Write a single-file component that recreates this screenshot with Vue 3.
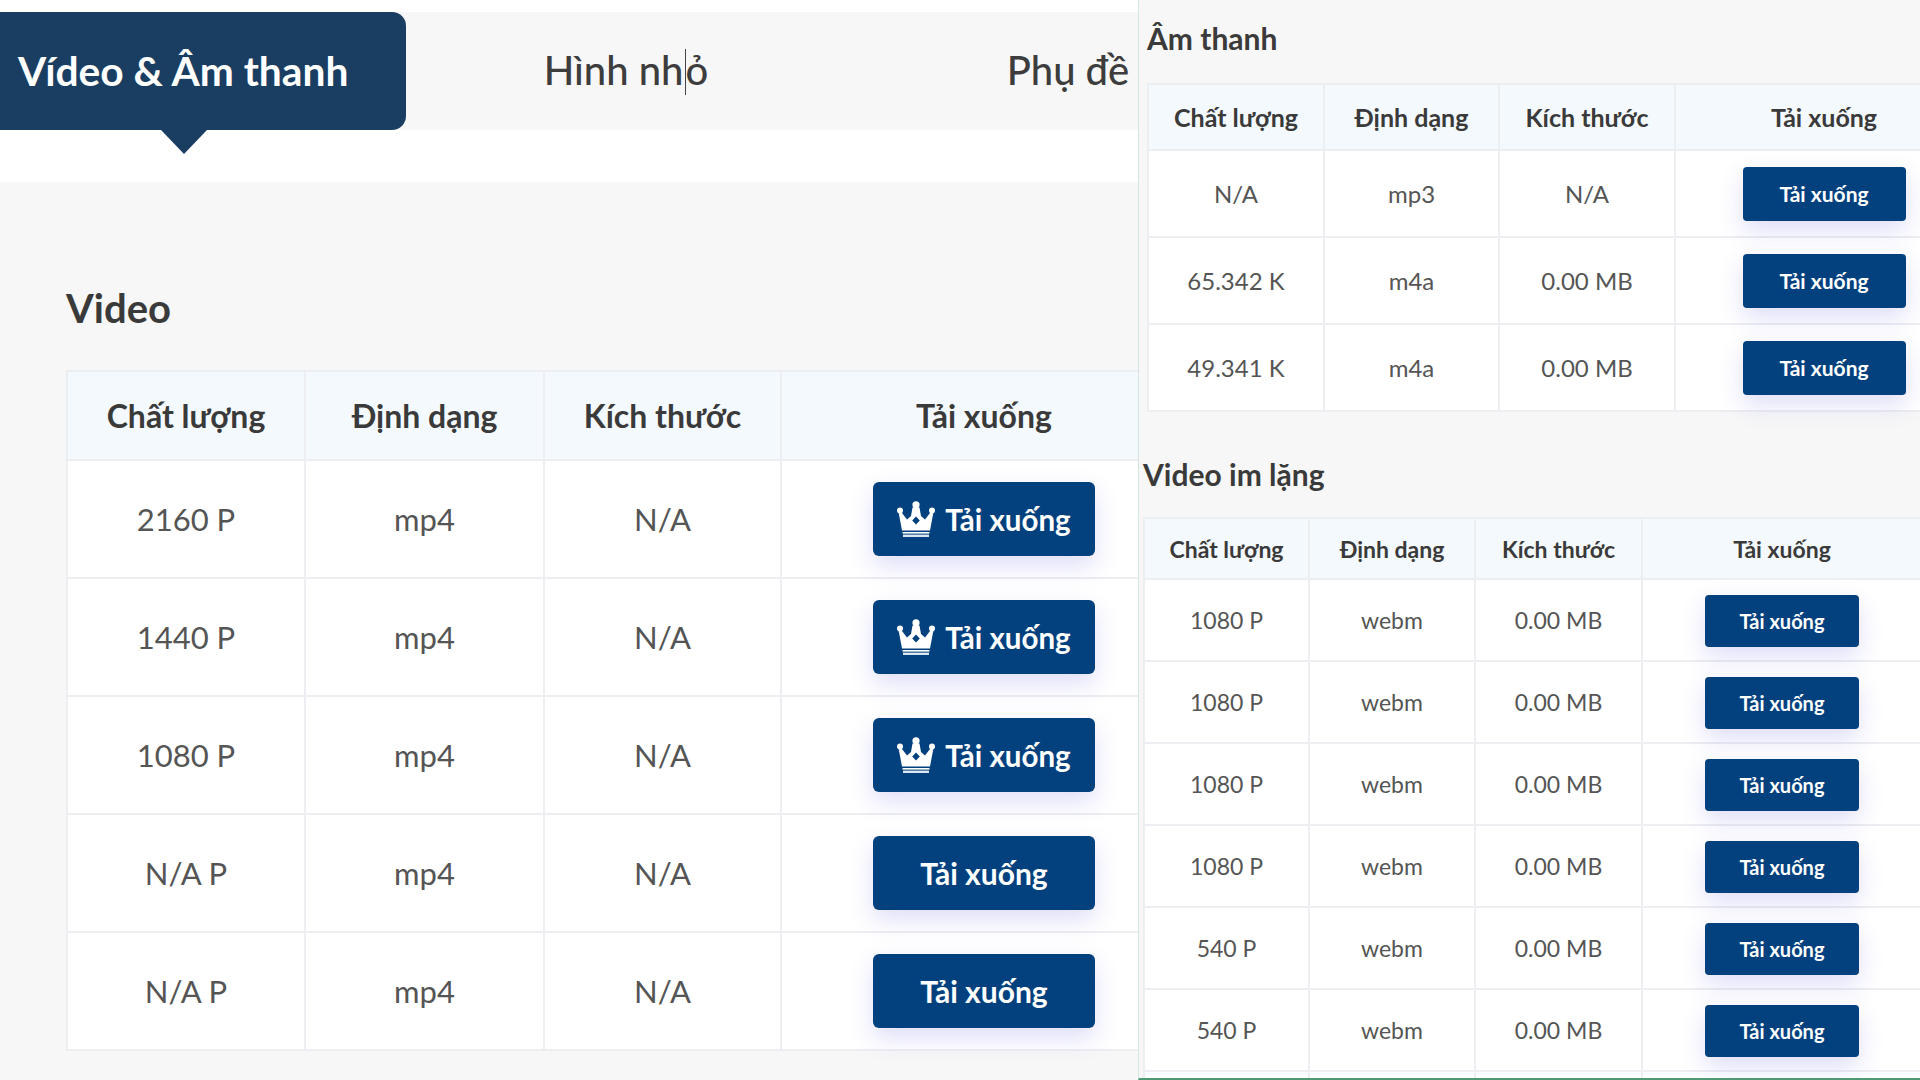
<script setup>
const videoRows = [
  { q: '2160 P', f: 'mp4', s: 'N/A', crown: true },
  { q: '1440 P', f: 'mp4', s: 'N/A', crown: true },
  { q: '1080 P', f: 'mp4', s: 'N/A', crown: true },
  { q: 'N/A P', f: 'mp4', s: 'N/A' },
  { q: 'N/A P', f: 'mp4', s: 'N/A' },
]
const audioRows = [
  { q: 'N/A', f: 'mp3', s: 'N/A', btn: true },
  { q: '65.342 K', f: 'm4a', s: '0.00 MB', btn: true },
  { q: '49.341 K', f: 'm4a', s: '0.00 MB', btn: true },
]
const silentRows = ['1080 P', '1080 P', '1080 P', '1080 P', '540 P', '540 P']
  .map((q) => ({ q, f: 'webm', s: '0.00 MB', btn: true }))
  .concat([{ q: '', f: '', s: '', btn: false }])
const tables = [
  { key: 'audio', title: 'Âm thanh', rows: audioRows },
  { key: 'silent', title: 'Video im lặng', rows: silentRows },
]
const heads = ['Chất lượng', 'Định dạng', 'Kích thước', 'Tải xuống']
</script>

<template>
  <div class="page">
    <section class="left">
      <nav class="tabs">
        <div class="tab active">Vídeo &amp; Âm thanh</div>
        <div class="tab second"><span class="caret-wrap">Hình nh<i class="caret"></i>ỏ</span></div>
        <div class="tab">Phụ đề</div>
      </nav>
      <div class="content">
        <h2 class="title-main">Video</h2>
        <table class="grid main">
          <thead>
            <tr><th v-for="h in heads" :key="h">{{ h }}</th></tr>
          </thead>
          <tbody>
            <tr v-for="(r, i) in videoRows" :key="i">
              <td>{{ r.q }}</td>
              <td>{{ r.f }}</td>
              <td>{{ r.s }}</td>
              <td>
                <button class="btn" :class="{ 'has-crown': r.crown }">
                  <svg v-if="r.crown" class="crown" viewBox="0 0 38 36" aria-hidden="true">
                    <circle cx="19" cy="3.8" r="3.6" fill="#fff" />
                    <circle cx="3" cy="9.5" r="3" fill="#fff" />
                    <circle cx="35" cy="9.5" r="3" fill="#fff" />
                    <path fill="#fff" fill-rule="evenodd" d="M15.5 6.5h7l1.5 8.5 4 3.5 5-6.5 3.5-1L33 29.5H5L1.5 11l3.5 1 5 6.5 4-3.5zM19 15.5l-3.8 4 3.8 4 3.8-4z" />
                    <path fill="#fff" d="M5.5 31h27v1.6h-27z" />
                    <path fill="#dbe6f2" d="M6 33.6h26V36H6z" />
                  </svg>
                  Tải xuống
                </button>
              </td>
            </tr>
          </tbody>
        </table>
      </div>
    </section>

    <section class="right">
      <div v-for="t in tables" :key="t.key" class="block" :class="t.key">
        <h3 class="title-side">{{ t.title }}</h3>
        <table class="grid" :class="t.key">
          <thead>
            <tr><th v-for="h in heads" :key="h">{{ h }}</th></tr>
          </thead>
          <tbody>
            <tr v-for="(r, i) in t.rows" :key="i">
              <td>{{ r.q }}</td>
              <td>{{ r.f }}</td>
              <td>{{ r.s }}</td>
              <td><button v-if="r.btn" class="btn">Tải xuống</button></td>
            </tr>
          </tbody>
        </table>
      </div>
    </section>
  </div>
</template>

<style>
html, body { margin: 0; background: #fff; }
</style>

<style scoped>
.page {
  display: flex;
  width: 1920px;
  height: 1080px;
  overflow: hidden;
  font-family: "Lato", "Noto Sans", "Liberation Sans", sans-serif;
  color: #3a3a3a;
}
.left {
  width: 1138px;
  flex: none;
  overflow: hidden;
  display: flex;
  flex-direction: column;
  background: #f7f7f7;
}
.tabs {
  display: flex;
  flex: none;
  height: 118px;
  border-top: 12px solid #fff;
  border-bottom: 52px solid #fff;
  background: #f7f7f7;
}
.tab {
  flex: none;
  width: 444px;
  display: flex;
  align-items: center;
  justify-content: center;
  padding-bottom: 2px;
  font-size: 40px;
  font-weight: 500;
  color: #3d3d3d;
  box-sizing: border-box;
}
.tab.second { width: 440px; }
.tab.active {
  position: relative;
  width: 406px;
  justify-content: flex-start;
  padding-left: 18px;
  background: #1a3e62;
  color: #fff;
  font-size: 40.7px;
  font-weight: 700;
  border-radius: 0 14px 14px 0;
}
.tab.active::after {
  content: "";
  position: absolute;
  left: 161px;
  top: 100%;
  border-left: 23px solid transparent;
  border-right: 23px solid transparent;
  border-top: 24px solid #1a3e62;
}
.caret-wrap { position: relative; }
.caret {
  display: inline-block;
  width: 1px;
  height: 46px;
  margin: 0 -1px 0 2px;
  vertical-align: -10px;
  background: #444;
}
.content {
  flex: 1;
  padding: 0 0 0 66px;
}
.title-main {
  margin: 0;
  padding-top: 101px;
  height: 87px;
  font-size: 40px;
  line-height: 50px;
  font-weight: 700;
  color: #3a3a3a;
}
.title-side {
  margin: 0;
  font-size: 30px;
  line-height: 40px;
  font-weight: 700;
  color: #3a3a3a;
}
.grid {
  table-layout: fixed;
  border-collapse: collapse;
  background: #fff;
  text-align: center;
}
.grid th {
  background: #f4f9fe;
  font-weight: 700;
  color: #3a3a3a;
  padding: 0;
}
.grid td {
  padding: 0;
  color: #555;
}
.grid th, .grid td { border: 2px solid #eceef2; }
.btn {
  font-family: inherit;
  display: inline-flex;
  align-items: center;
  justify-content: center;
  border: 0;
  color: #fff;
  background: #03417e;
  font-weight: 700;
  vertical-align: middle;
  box-shadow: 0 10px 24px rgba(80, 70, 220, 0.18);
}
.crown { width: 38px; height: 36px; margin-right: 10px; }

.main { width: 1120px; }
.main th { height: 87px; font-size: 32px; }
.main td { height: 116px; font-size: 31px; }
.main th:nth-child(1) { width: 236px; }
.main th:nth-child(2) { width: 237px; }
.main th:nth-child(3) { width: 235px; }
.main th:nth-child(4) { width: 404px; }
.main .btn { width: 222px; height: 74px; border-radius: 6px; font-size: 30px; }
.main .btn.has-crown { font-size: 29.5px; }

.right {
  flex: 1;
  min-width: 0;
  overflow: hidden;
  box-sizing: border-box;
  background: #f7f7f7;
  border-left: 1px solid #d3e6e2;
  border-bottom: 2px solid #4f9a75;
  height: 1080px;
}
.block.audio { padding: 18px 0 0 8px; height: 454px; box-sizing: border-box; }
.block.audio .title-side { margin-bottom: 25px; }
.block.silent { padding: 0 0 0 4px; }
.block.silent .title-side { margin-bottom: 23px; }

.grid.audio { width: 825px; }
.grid.audio th { height: 64px; font-size: 25px; }
.grid.audio td { height: 85px; font-size: 24px; }
.grid.audio th:nth-child(1) { width: 174px; }
.grid.audio th:nth-child(2) { width: 173px; }
.grid.audio th:nth-child(3) { width: 174px; }
.grid.audio th:nth-child(4) { width: 296px; }
.grid.audio .btn { width: 163px; height: 54px; border-radius: 4px; font-size: 21px; }

.grid.silent { width: 778px; }
.grid.silent th { height: 59px; font-size: 23px; }
.grid.silent td { height: 80px; font-size: 23px; }
.grid.silent th:nth-child(1) { width: 163px; }
.grid.silent th:nth-child(2) { width: 164px; }
.grid.silent th:nth-child(3) { width: 165px; }
.grid.silent th:nth-child(4) { width: 278px; }
.grid.silent .btn { width: 154px; height: 52px; margin-top: 2px; border-radius: 4px; font-size: 20px; }
</style>
